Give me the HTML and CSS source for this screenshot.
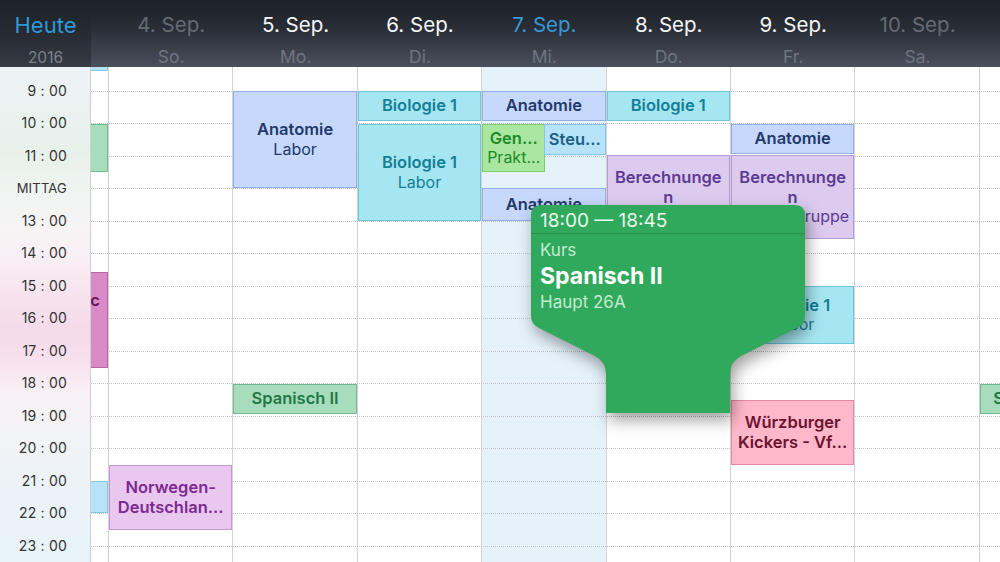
FILE: index.html
```html
<!DOCTYPE html>
<html lang="de">
<head>
    <meta charset="UTF-8">
    <meta name="viewport" content="width=device-width, initial-scale=1.0">
    <title>Woche</title>
    <link rel="stylesheet" href="styles.css">
</head>
<body>
<div class="app">
    <header class="topbar">
        <div class="corner">
            <div class="today-link">Heute</div>
            <div class="year">2016</div>
        </div>
        <div class="days-head">
            <div class="day-head weekend"></div>
            <div class="day-head weekend"><div class="date">4. Sep.</div><div class="wday">So.</div></div>
            <div class="day-head"><div class="date">5. Sep.</div><div class="wday">Mo.</div></div>
            <div class="day-head"><div class="date">6. Sep.</div><div class="wday">Di.</div></div>
            <div class="day-head current"><div class="date">7. Sep.</div><div class="wday">Mi.</div></div>
            <div class="day-head"><div class="date">8. Sep.</div><div class="wday">Do.</div></div>
            <div class="day-head"><div class="date">9. Sep.</div><div class="wday">Fr.</div></div>
            <div class="day-head weekend"><div class="date">10. Sep.</div><div class="wday">Sa.</div></div>
            <div class="day-head weekend"></div>
        </div>
    </header>

    <main class="board">
        <div class="times">
            <div class="time">9 : 00</div>
            <div class="time">10 : 00</div>
            <div class="time">11 : 00</div>
            <div class="time noon">MITTAG</div>
            <div class="time">13 : 00</div>
            <div class="time">14 : 00</div>
            <div class="time">15 : 00</div>
            <div class="time">16 : 00</div>
            <div class="time">17 : 00</div>
            <div class="time">18 : 00</div>
            <div class="time">19 : 00</div>
            <div class="time">20 : 00</div>
            <div class="time">21 : 00</div>
            <div class="time">22 : 00</div>
            <div class="time">23 : 00</div>
        </div>

        <div class="week">
            <div class="hour-lines">
                <div class="hour-line"></div><div class="hour-line"></div><div class="hour-line"></div>
                <div class="hour-line"></div><div class="hour-line"></div><div class="hour-line"></div>
                <div class="hour-line"></div><div class="hour-line"></div><div class="hour-line"></div>
                <div class="hour-line"></div><div class="hour-line"></div><div class="hour-line"></div>
                <div class="hour-line"></div><div class="hour-line"></div><div class="hour-line"></div>
            </div>

            <!-- Sa. 3. Sep. (mostly scrolled away) -->
            <div class="day first">
                <div class="event sky" style="top:-20px;height:24px"></div>
                <div class="event green" style="top:57px;height:48px"></div>
                <div class="event magenta" style="top:205px;height:96px">
                    <div class="title">HipHop Basic</div>
                    <div class="spacer"></div>
                </div>
                <div class="event sky" style="top:414px;height:32px"></div>
            </div>

            <!-- So. 4. Sep. -->
            <div class="day">
                <div class="event violet" style="top:398px;height:65px">
                    <div class="title">Norwegen-<wbr>Deutschlan…</div>
                </div>
            </div>

            <!-- Mo. 5. Sep. -->
            <div class="day">
                <div class="event blue" style="top:24px;height:97px">
                    <div class="title">Anatomie</div>
                    <div class="sub">Labor</div>
                </div>
                <div class="event green" style="top:317px;height:30px"><div class="title">Spanisch II</div></div>
            </div>

            <!-- Di. 6. Sep. -->
            <div class="day">
                <div class="event cyan" style="top:24px;height:30px"><div class="title">Biologie 1</div></div>
                <div class="event cyan" style="top:57px;height:97px">
                    <div class="title">Biologie 1</div>
                    <div class="sub">Labor</div>
                </div>
            </div>

            <!-- Mi. 7. Sep. -->
            <div class="day today">
                <div class="event blue" style="top:24px;height:30px"><div class="title">Anatomie</div></div>
                <div class="event lime half-left" style="top:57px;height:48px">
                    <div class="title">Gen…</div>
                    <div class="sub">Prakt…</div>
                </div>
                <div class="event sky half-right" style="top:57px;height:31px"><div class="title">Steu…</div></div>
                <div class="event blue" style="top:121px;height:33px"><div class="title">Anatomie</div></div>
            </div>

            <!-- Do. 8. Sep. -->
            <div class="day">
                <div class="event cyan" style="top:24px;height:30px"><div class="title">Biologie 1</div></div>
                <div class="event lavender" style="top:88px;height:84px">
                    <div class="title">Berechnunge<br>n</div>
                    <div class="sub">Übungsgruppe</div>
                </div>
            </div>

            <!-- Fr. 9. Sep. -->
            <div class="day">
                <div class="event blue" style="top:57px;height:30px"><div class="title">Anatomie</div></div>
                <div class="event lavender" style="top:88px;height:84px">
                    <div class="title">Berechnunge<br>n</div>
                    <div class="sub">Übungsgruppe</div>
                </div>
                <div class="event cyan" style="top:219px;height:58px">
                    <div class="title">Biologie 1</div>
                    <div class="sub">Labor</div>
                </div>
                <div class="event pink" style="top:333px;height:65px">
                    <div class="title">Würzburger Kickers - Vf…</div>
                </div>
            </div>

            <!-- Sa. 10. Sep. -->
            <div class="day"></div>

            <!-- So. 11. Sep. -->
            <div class="day">
                <div class="event green narrow" style="top:317px;height:30px"><div class="title">Spanisch II</div></div>
            </div>
        </div>
    </main>

    <!-- detail bubble for the selected lesson -->
    <div class="popover">
        <svg class="bubble" width="274" height="208" viewBox="0 0 274 208">
            <path d="M10,0 H264 Q274,0 274,10 V111 Q274,119 266,123 L210,151 Q199,157 199,169 V208 H75 V169 Q75,157 64,151 L8,123 Q0,119 0,111 V10 Q0,0 10,0 Z" fill="#30a95d"/>
            <line x1="0" y1="28.5" x2="274" y2="28.5" stroke="#24914c" stroke-width="1"/>
        </svg>
        <div class="pop-time">18:00 — 18:45</div>
        <div class="pop-body">
            <div class="pop-kind">Kurs</div>
            <div class="pop-title">Spanisch II</div>
            <div class="pop-room">Haupt 26A</div>
        </div>
    </div>
</div>
</body>
</html>
```

FILE: styles.css
```css
* {
    box-sizing: border-box;
}

body {
    margin: 0;
    font-family: Inter, "Noto Sans", sans-serif;
    background: #fff;
    overflow: hidden;
}

.app {
    position: relative;
    width: 1000px;
    height: 562px;
    overflow: hidden;
}

/* top bar */

.topbar {
    display: flex;
    height: 67px;
    overflow: hidden;
    background: linear-gradient(to bottom, #1c2027 0%, #2a2f37 45%, #4a515d 100%);
}

.corner {
    position: relative;
    z-index: 1;
    flex: none;
    width: 91px;
    text-align: center;
    background: linear-gradient(to bottom, #1e2229 0%, #262a31 50%, #373c45 100%);
}

.today-link {
    padding-top: 11px;
    font-size: 22px;
    line-height: 29px;
    color: #2f98d8;
}

.year {
    margin-top: 9px;
    font-size: 15.5px;
    line-height: 18px;
    color: #7c818a;
}

.days-head {
    display: flex;
    flex: 1;
    overflow: hidden;
}

.day-head {
    flex: none;
    width: 124.4px;
    text-align: center;
}

.day-head:first-child {
    margin-left: -106.4px;
}

.date {
    padding-top: 11px;
    font-size: 20.5px;
    line-height: 28px;
    color: #f4f5f7;
}

.wday {
    margin-top: 8px;
    font-size: 17.5px;
    line-height: 20px;
    color: #6f7581;
}

.day-head.weekend .date {
    color: #656a73;
}

.day-head.current .date {
    color: #3898d6;
}

/* grid */

.board {
    display: flex;
    height: 495px;
}

.times {
    flex: none;
    width: 91px;
    padding: 7.75px 23px 0 0;
    border-right: 1px solid #cfd0d2;
    text-align: right;
    background: linear-gradient(to bottom,
        #eef3f5 0%, #e7f1ec 17%, #f1f4f2 26%, #f7f4f5 33%,
        #f8edf3 40%, #f6e0ec 48%, #f5daea 54%, #f7e2ee 60%,
        #f8eff3 65%, #f4f3f5 72%, #eef3f7 80%, #eaf3f9 90%, #e8f2f9 100%);
}

.time {
    height: 32.5px;
    font-size: 14px;
    line-height: 32.5px;
    color: #333;
    letter-spacing: 0.2px;
}

.time.noon {
    font-size: 13px;
}

.week {
    position: relative;
    display: flex;
    flex: 1;
    overflow: hidden;
}

.hour-lines {
    position: absolute;
    inset: 0;
    z-index: 1;
    padding-top: 23.5px;
    pointer-events: none;
}

.hour-line {
    height: 32.5px;
    border-top: 1px dotted #c3c3c3;
}

.day {
    position: relative;
    flex: none;
    width: 124.4px;
    border-right: 1px solid #d3d3d3;
}

.day.first {
    margin-left: -106.4px;
}

.day.today {
    background: #e6f2fa;
}

/* events */

.event {
    position: absolute;
    z-index: 2;
    left: 0;
    right: 0;
    display: flex;
    flex-direction: column;
    align-items: center;
    justify-content: center;
    padding: 0 4px;
    border: 1px solid;
    text-align: center;
    overflow: hidden;
}

.event .title {
    font-size: 16.5px;
    font-weight: 600;
    line-height: 19.5px;
    white-space: nowrap;
}

.event .title:has(wbr),
.pink .title {
    white-space: normal;
}

.event .sub {
    font-size: 16px;
    line-height: 19px;
    white-space: nowrap;
}

.event .spacer {
    height: 38px;
}

.event.half-left {
    right: auto;
    width: 63px;
}

.event.half-right {
    left: 62px;
}

.event.narrow {
    right: 9px;
}

.blue {
    background: #c6d8fb;
    border-color: #93ade5;
    color: #23386b;
}

.cyan {
    background: #a6e6f2;
    border-color: #6fc6d8;
    color: #137f95;
}

.green {
    background: #a7dcbc;
    border-color: #6fba8e;
    color: #1f7a45;
}

.lime {
    background: #a9e6a0;
    border-color: #7ccd71;
    color: #1e8b2b;
}

.sky {
    background: #b7e3f8;
    border-color: #86c7e6;
    color: #1b5f86;
}

.lavender {
    background: #dccbee;
    border-color: #b59ad8;
    color: #5d3b92;
}

.violet {
    background: #e9c7ef;
    border-color: #c797d3;
    color: #7b2a91;
}

.pink {
    background: #ffb7ca;
    border-color: #e68aa1;
    color: #6c1330;
}

.magenta {
    background: #d98ac6;
    border-color: #b9669f;
    color: #6a1458;
}

/* popover */

.popover {
    position: absolute;
    z-index: 5;
    left: 531px;
    top: 205px;
    width: 274px;
    height: 208px;
    color: #fff;
}

.bubble {
    position: absolute;
    left: 0;
    top: 0;
    filter: drop-shadow(3px 7px 8px rgba(0, 0, 0, 0.38));
}

.pop-time,
.pop-body {
    position: relative;
}

.pop-time {
    height: 29px;
    padding: 1px 0 0 9px;
    font-size: 19px;
    line-height: 29px;
    color: #eaf7ee;
}

.pop-body {
    padding: 4px 9px 0;
}

.pop-kind,
.pop-room {
    font-size: 17px;
    line-height: 24px;
    color: #c4ebd1;
}

.pop-title {
    font-size: 23px;
    font-weight: 700;
    line-height: 28px;
}
```
